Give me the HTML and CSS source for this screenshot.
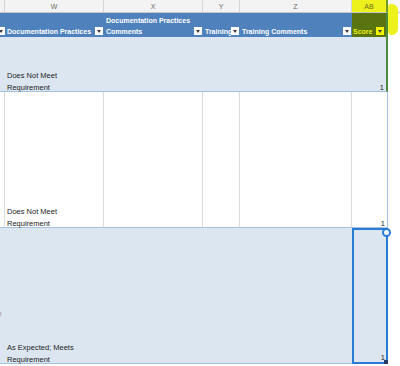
FILE: index.html
```html
<!DOCTYPE html>
<html lang="en">
<head>
<meta charset="UTF-8" />
<meta name="viewport" content="width=device-width, initial-scale=1" />
<title>Sheet - Documentation Practices</title>
<link rel="stylesheet" href="styles.css">
</head>
<body>

<div class="sheet">
  <!-- column letters -->
  <div class="colhead"></div>
  <div class="colhead">W</div>
  <div class="colhead">X</div>
  <div class="colhead">Y</div>
  <div class="colhead">Z</div>
  <div class="colhead ab">AB</div>
  <div class="colhead rest"></div>

  <!-- table header row -->
  <div class="th v"><span class="filter"></span></div>
  <div class="th"><span class="label">Documentation Practices</span><span class="filter"></span></div>
  <div class="th"><span class="label">Documentation Practices Comments</span><span class="filter"></span></div>
  <div class="th"><span class="label nowrap">Training</span><span class="filter"></span></div>
  <div class="th"><span class="label">Training Comments</span><span class="filter"></span></div>
  <div class="th ab"><span class="label">Score</span><span class="filter"></span></div>
  <div class="th rest"></div>

  <!-- row 1 -->
  <div class="cell band"></div>
  <div class="cell band"><span class="txt">Does Not Meet<br>Requirement</span></div>
  <div class="cell band"></div>
  <div class="cell band"></div>
  <div class="cell band"></div>
  <div class="cell band num mark"><span class="txt">1</span></div>
  <div class="cell rest"></div>

  <!-- row 2 -->
  <div class="cell plain"></div>
  <div class="cell plain"><span class="txt">Does Not Meet<br>Requirement</span></div>
  <div class="cell plain"></div>
  <div class="cell plain"></div>
  <div class="cell plain"></div>
  <div class="cell plain num last"><span class="txt">1</span></div>
  <div class="cell rest"></div>

  <!-- row 3 -->
  <div class="cell band clip"><span class="stub">l</span></div>
  <div class="cell band"><span class="txt">As Expected; Meets<br>Requirement</span></div>
  <div class="cell band"></div>
  <div class="cell band"></div>
  <div class="cell band"></div>
  <div class="cell band num last selected"><span class="txt">1</span></div>
  <div class="cell rest"></div>
</div>

<!-- highlighter mark over the Score column -->
<div class="marker"></div>

</body>
</html>
```

FILE: styles.css
```css
body {
  margin: 0;
  font-family: 'Liberation Sans', Arial, sans-serif;
  background: #ffffff;
  overflow: hidden;
  width: 400px;
  height: 366px;
  position: relative;
}
.sheet {
  display: grid;
  grid-template-columns: 5px 99px 99px 37px 112px 36px 12px;
  grid-template-rows: 13px 24px 55px 136px 136px;
}
.colhead {
  box-sizing: border-box;
  background: #f3f3f3;
  border-right: 1px solid #d6d6d6;
  border-bottom: 1px solid #c6c6c6;
  color: #6a6a6a;
  font-size: 7px;
  line-height: 13px;
  text-align: center;
}
.colhead.ab {
  background: #eef21c;
  color: #6f7020;
  border-right: 2px solid #6f9a2a;
}
.colhead.rest {
  border-right: none;
  background: #f7f7f7;
}
.th {
  box-sizing: border-box;
  background: #4f81bd;
  display: flex;
  align-items: flex-end;
  justify-content: space-between;
  overflow: hidden;
  padding: 0 1px 0 2px;
  color: #ffffff;
  font-weight: bold;
  font-size: 7px;
  line-height: 11px;
}
.th.v {
  justify-content: flex-end;
  padding: 0;
}
.th.ab {
  background: #5a7412;
  color: #f0f21a;
  padding-left: 1px;
  border-right: 2px solid #4d8a3c;
}
.th.rest {
  background: #ffffff;
}
.label {
  flex: 1;
  min-width: 0;
  overflow: hidden;
}
.label.nowrap {
  white-space: nowrap;
}
.filter {
  flex-shrink: 0;
  width: 8px;
  height: 8px;
  margin-bottom: 2px;
  background: #ffffff;
  position: relative;
}
.filter::after {
  content: "";
  position: absolute;
  left: 2px;
  top: 3px;
  border-left: 2px solid transparent;
  border-right: 2px solid transparent;
  border-top: 3px solid #3a3a3a;
}
.th.ab .filter {
  background: #f2f400;
  margin-right: 1px;
}
.cell {
  box-sizing: border-box;
  display: flex;
  flex-direction: column;
  justify-content: flex-end;
  padding: 0 2px 0 2px;
  font-size: 7.5px;
  line-height: 11.5px;
  color: #1d1d1d;
}
.txt {
  display: block;
  margin-bottom: -2px;
}
.cell.band {
  background: #dce6f1;
  border-bottom: 1px solid #a6c0e2;
}
.cell.plain {
  background: #ffffff;
  border-right: 1px solid #dadada;
  border-bottom: 1px solid #a6c0e2;
}
.cell.rest {
  background: #ffffff;
}
.cell.num {
  text-align: right;
  padding-right: 2px;
}
.cell.mark {
  border-right: 2px solid #4d8a3c;
}
.cell.last {
  border-right: 1px solid #a6c0e2;
}
.cell.clip {
  padding: 0;
  overflow: hidden;
}
.stub {
  display: block;
  margin-bottom: 46px;
  color: #8a7a6a;
  font-size: 6px;
  line-height: 6px;
}
.cell.selected {
  position: relative;
  border: 2px solid #2b7ad6;
  padding-right: 1px;
}
.cell.selected .txt {
  margin-bottom: -1px;
}
.cell.selected::before {
  content: "";
  position: absolute;
  right: -5px;
  top: -2px;
  width: 5px;
  height: 5px;
  border: 2px solid #2b7ad6;
  border-radius: 50%;
  background: #ffffff;
}
.cell.selected::after {
  content: "";
  position: absolute;
  right: -2px;
  bottom: -2px;
  width: 4px;
  height: 4px;
  background: #1f3f6a;
}
.marker {
  position: absolute;
  left: 388px;
  top: 4px;
  width: 10px;
  height: 31px;
  background: #eef21c;
  border-radius: 3px 6px 6px 4px;
}
```
